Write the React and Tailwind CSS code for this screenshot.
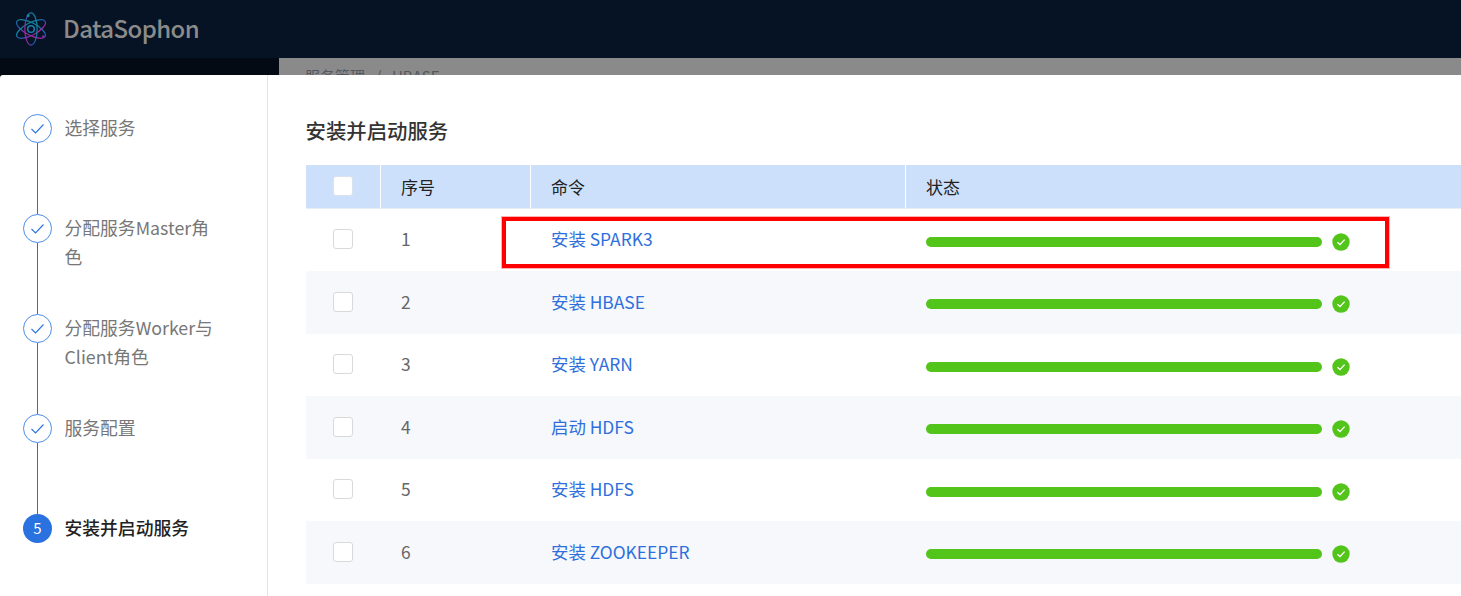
import React from 'react';

const FONT = '[font-family:"Noto_Sans_CJK_SC","Noto_Sans",sans-serif]';

const STEPS = [
  { label: '选择服务', height: 'h-[100px]' },
  { label: '分配服务Master角色', height: 'h-[100px]' },
  { label: '分配服务Worker与Client角色', height: 'h-[100px]' },
  { label: '服务配置', height: 'h-[100px]' },
  { label: '安装并启动服务', height: 'h-[60px]', active: true },
];

const ROWS = [
  { id: 1, command: '安装 SPARK3' },
  { id: 2, command: '安装 HBASE' },
  { id: 3, command: '安装 YARN' },
  { id: 4, command: '启动 HDFS' },
  { id: 5, command: '安装 HDFS' },
  { id: 6, command: '安装 ZOOKEEPER' },
];

const Logo = () => (
  <svg width="34" height="38" viewBox="0 0 36 38" fill="none" strokeWidth="1.3">
    <defs>
      <linearGradient id="atom" x1="0.2" y1="0" x2="0.7" y2="1">
        <stop offset="0" stopColor="#0c8f9c" />
        <stop offset="0.6" stopColor="#2456b0" />
        <stop offset="1" stopColor="#b0209c" />
      </linearGradient>
    </defs>
    <ellipse cx="18" cy="19" rx="17" ry="6.5" stroke="url(#atom)" transform="rotate(28 18 19)" />
    <ellipse cx="18" cy="19" rx="17" ry="6.5" stroke="url(#atom)" transform="rotate(-28 18 19)" />
    <ellipse cx="18" cy="19" rx="17" ry="6.5" stroke="url(#atom)" transform="rotate(90 18 19)" />
    <circle cx="18" cy="19" r="3.5" stroke="#1d7fb0" strokeWidth="1.6" />
    <circle cx="15" cy="5" r="1.5" fill="#0c8f9c" />
    <circle cx="31" cy="27" r="1.3" fill="#8a2bb0" />
  </svg>
);

const Step = ({ label, height, active, last }) => (
  <div className={`flex ${height}`}>
    <div className="flex w-[29px] shrink-0 flex-col items-center">
      {active ? (
        <div className={`flex h-[29px] w-[29px] items-center justify-center rounded-full bg-[#2a72e0] text-[15px] text-white ${FONT}`}>5</div>
      ) : (
        <div className="flex h-[29px] w-[29px] items-center justify-center rounded-full border border-[#4c8ce8]">
          <svg width="15" height="12" viewBox="0 0 15 12" fill="none" stroke="#2a72e0" strokeWidth="1.1">
            <path d="M1.5 6 L5.5 10 L13.5 1.5" />
          </svg>
        </div>
      )}
      {!last && <div className="w-px flex-1 bg-[#2a6fd6]" />}
    </div>
    <div className={`-mt-[1px] ml-[12.5px] w-[155px] text-[17.8px] leading-[29px] ${active ? 'font-medium text-[#222222]' : 'text-[#777777]'}`}>
      {label}
    </div>
  </div>
);

const DoneIcon = () => (
  <svg width="18" height="18" viewBox="0 0 18 18" className="ml-[10px] shrink-0">
    <circle cx="9" cy="9" r="8.7" fill="#52c41a" />
    <path d="M5.4 9.2 L8 11.6 L12.6 6.6" fill="none" stroke="#ffffff" strokeWidth="1.4" />
  </svg>
);

const Checkbox = ({ header }) => (
  <div className={`h-[20px] w-[20px] rounded-[3px] border bg-white ${header ? 'border-[#d9e2ee]' : 'border-[#d9d9d9]'}`} />
);

export default function App() {
  return (
    <div className={`relative flex h-[596px] w-[1461px] flex-col overflow-hidden bg-[#8a8a8a] ${FONT}`}>
      {/* Top bar */}
      <div className="flex h-[58px] shrink-0 items-center bg-[#061324] pl-[14px]">
        <Logo />
        <span className="mb-[3px] ml-[15px] text-[24px] font-medium tracking-[-0.6px] text-[#8b8b8b]">DataSophon</span>
      </div>

      {/* Page behind the drawer */}
      <div className="flex flex-1">
        <div className="w-[279px] shrink-0 bg-[#030a14]" />
        <div className="pl-[26px] pt-[8px] text-[15px] leading-[20px] text-[#55585f]">
          服务管理<span className="mx-[10.5px]">/</span>HBASE
        </div>
      </div>

      {/* Drawer */}
      <div className="absolute inset-x-0 bottom-0 top-[75px] flex rounded-tl-[3px] bg-white">
        <div className="w-[268px] shrink-0 border-r border-[#e4e4e4] pl-[23px] pt-[39px]">
          {STEPS.map((step, i) => (
            <Step key={step.label} {...step} last={i === STEPS.length - 1} />
          ))}
        </div>

        <div className="min-w-0 flex-1 pl-[38px]">
          <h2 className="-ml-[0.5px] pt-[41px] text-[20.4px] font-medium leading-[28px] text-[#333333]">安装并启动服务</h2>

          <div className="relative mt-[21px]">
            <div className="flex h-[43.6px] items-center border-b border-[#e8eef7] bg-[#cde0fb] text-[17px] text-[#222222]">
              <div className="flex h-full w-[75px] items-center justify-center border-r border-white pr-[1px]"><Checkbox header /></div>
              <div className="flex h-full w-[150px] items-center border-r border-white pl-[20px]">序号</div>
              <div className="flex h-full w-[375px] items-center border-r border-white pl-[20px]">命令</div>
              <div className="pl-[20px]">状态</div>
            </div>

            {ROWS.map((row, i) => (
              <div key={row.id} className={`flex h-[62.5px] items-center text-[17.4px] ${i % 2 === 1 ? 'bg-[#f6f8fc]' : 'bg-white'}`}>
                <div className="flex w-[75px] justify-center pb-[1px] pr-[2px]"><Checkbox /></div>
                <div className="w-[150px] pb-[1px] pl-[20px] text-[#666666]">{row.id}</div>
                <div className="w-[375px] pb-[1px] pl-[20px] text-[#2f6fdc]">{row.command}</div>
                <div className="flex items-center pl-[20px] pt-[4px]">
                  <div className="h-[10px] w-[396px] rounded-full bg-[#52c41a]" />
                  <DoneIcon />
                </div>
              </div>
            ))}

            {/* Red annotation box drawn over the first row */}
            <div className="pointer-events-none absolute left-[196px] top-[52px] h-[50.5px] w-[886.5px] border-[4px] border-[#ff0000] ring-1 ring-[#ff0000]/30" />
          </div>
        </div>
      </div>
    </div>
  );
}
